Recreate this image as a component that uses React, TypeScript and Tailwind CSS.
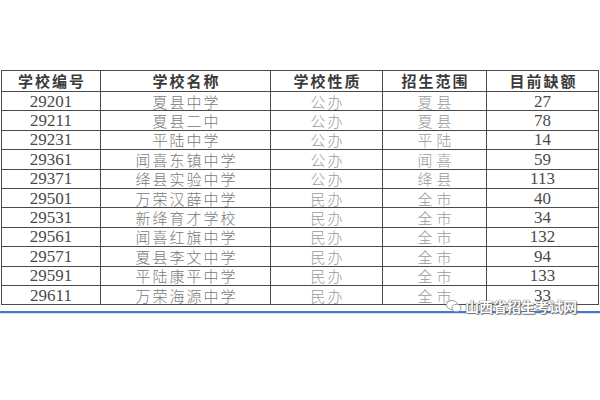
import React from "react";

const rows: [string, string, string, string, string][] = [
  ["29201", "夏县中学", "公办", "夏县", "27"],
  ["29211", "夏县二中", "公办", "夏县", "78"],
  ["29231", "平陆中学", "公办", "平陆", "14"],
  ["29361", "闻喜东镇中学", "公办", "闻喜", "59"],
  ["29371", "绛县实验中学", "公办", "绛县", "113"],
  ["29501", "万荣汉薛中学", "民办", "全市", "40"],
  ["29531", "新绛育才学校", "民办", "全市", "34"],
  ["29561", "闻喜红旗中学", "民办", "全市", "132"],
  ["29571", "夏县李文中学", "民办", "全市", "94"],
  ["29591", "平陆康平中学", "民办", "全市", "133"],
  ["29611", "万荣海源中学", "民办", "全市", "33"],
];

const headers = ["学校编号", "学校名称", "学校性质", "招生范围", "目前缺额"];

export default function App() {
  return (
    <div className="relative w-[600px] h-[400px] bg-white overflow-hidden">
      <div className="pt-[70px] pl-[1px]">
        <table className="table-fixed border-collapse w-[597px]">
          <colgroup>
            <col className="w-[99px]" />
            <col className="w-[170px]" />
            <col className="w-[112px]" />
            <col className="w-[104px]" />
            <col className="w-[112px]" />
          </colgroup>
          <thead>
            <tr className="h-[21px]">
              {headers.map((h) => (
                <th
                  key={h}
                  className="border-[1.5px] border-[#4a4a4a] p-0 text-center align-middle text-[15px] leading-[18px] font-bold tracking-[2px] text-[#3a3a3a] [font-family:'Noto_Sans_CJK_SC',sans-serif]"
                >
                  <span className="pl-[2px]">{h}</span>
                </th>
              ))}
            </tr>
          </thead>
          <tbody>
            {rows.map((r) => (
              <tr key={r[0]} className="h-[19.4px]">
                <td className="border-[1.5px] border-[#4a4a4a] p-0 text-center align-middle text-[17px] leading-[17px] text-[#4a4a4a] [font-family:'Liberation_Serif',serif]">
                  {r[0]}
                </td>
                <td className="border-[1.5px] border-[#4a4a4a] p-0 text-center align-middle text-[15px] leading-[17px] font-light tracking-[2px] text-[#7a7a7a] [font-family:'Noto_Sans_CJK_SC',sans-serif]">
                  <span className="pl-[2px]">{r[1]}</span>
                </td>
                <td className="border-[1.5px] border-[#4a4a4a] p-0 text-center align-middle text-[15px] leading-[17px] font-light tracking-[2px] text-[#9a9a9a] [font-family:'Noto_Sans_CJK_SC',sans-serif]">
                  <span className="pl-[2px]">{r[2]}</span>
                </td>
                <td className="border-[1.5px] border-[#4a4a4a] p-0 text-center align-middle text-[15px] leading-[17px] font-light tracking-[4px] text-[#9a9a9a] [font-family:'Noto_Sans_CJK_SC',sans-serif]">
                  <span className="pl-[4px]">{r[3]}</span>
                </td>
                <td className="border-[1.5px] border-[#4a4a4a] p-0 text-center align-middle text-[17px] leading-[17px] text-[#4a4a4a] [font-family:'Liberation_Serif',serif]">
                  {r[4]}
                </td>
              </tr>
            ))}
          </tbody>
        </table>
      </div>
      <div className="mt-[6px] h-[2px] w-full bg-[#3f7cc6]" />
      <div className="h-[1px] w-full bg-[#d3e0f0]" />

      <div className="absolute left-[446px] top-[298px] flex items-center gap-[3px]">
        <svg width="16" height="14" viewBox="0 0 16 14">
          <ellipse cx="6" cy="6" rx="5.5" ry="4.5" fill="white" stroke="#9a9a9a" strokeWidth="1" />
          <ellipse cx="10.5" cy="9" rx="4.5" ry="3.6" fill="white" stroke="#9a9a9a" strokeWidth="1" />
        </svg>
        <span className="text-[14px] leading-[16px] font-bold text-white [font-family:'Noto_Sans_CJK_SC',sans-serif] [text-shadow:0_0_1px_#555,0_0_1px_#555,1px_1px_1px_#777]">
          山西省招生考试网
        </span>
      </div>
    </div>
  );
}
